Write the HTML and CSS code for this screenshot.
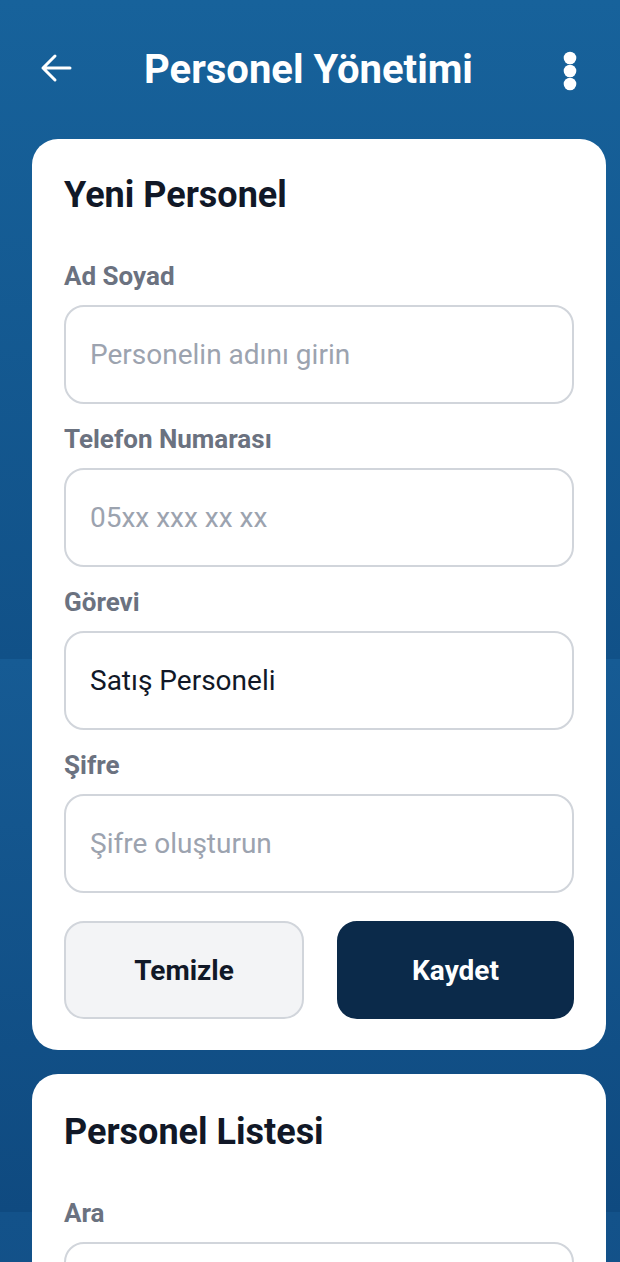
FILE: index.html
```html
<!DOCTYPE html>
<html lang="tr">
<head>
<meta charset="utf-8">
<title>Personel Yönetimi</title>
<link rel="stylesheet" href="styles.css">
</head>
<body>
<div class="page">
  <header class="topbar">
    <div class="topbar-left">
      <svg class="icon-back" width="32" height="32" viewBox="0 0 32 32" aria-hidden="true">
        <path d="M30 16H3M15 4L3 16l12 12" fill="none" stroke="#fff" stroke-width="3" stroke-linecap="round" stroke-linejoin="round"/>
      </svg>
    </div>
    <h1 class="topbar-title">Personel Yönetimi</h1>
    <div class="topbar-right">
      <svg class="icon-more" width="14" height="40" viewBox="0 0 14 40" aria-hidden="true">
        <circle cx="7" cy="7" r="6.3" fill="#fff"/>
        <circle cx="7" cy="20" r="6.3" fill="#fff"/>
        <circle cx="7" cy="33" r="6.3" fill="#fff"/>
      </svg>
    </div>
  </header>

  <section class="card">
    <h2 class="card-title">Yeni Personel</h2>
    <div class="fields">
      <div class="field">
        <label class="field-label">Ad Soyad</label>
        <div class="input placeholder">Personelin adını girin</div>
      </div>
      <div class="field">
        <label class="field-label">Telefon Numarası</label>
        <div class="input placeholder">05xx xxx xx xx</div>
      </div>
      <div class="field">
        <label class="field-label">Görevi</label>
        <div class="input">Satış Personeli</div>
      </div>
      <div class="field">
        <label class="field-label">Şifre</label>
        <div class="input placeholder">Şifre oluşturun</div>
      </div>
    </div>
    <div class="actions">
      <button class="btn btn-light">Temizle</button>
      <button class="btn btn-dark">Kaydet</button>
    </div>
  </section>

  <section class="card">
    <h2 class="card-title">Personel Listesi</h2>
    <div class="fields">
      <div class="field">
        <label class="field-label">Ara</label>
        <div class="input placeholder"></div>
      </div>
    </div>
  </section>
</div>
</body>
</html>
```

FILE: styles.css
```css
* { box-sizing: border-box; }

html, body {
  margin: 0;
  padding: 0;
}

body {
  font-family: Roboto, "Noto Sans", "Liberation Sans", sans-serif;
  background: linear-gradient(to bottom,
    #17629b 0px, #115188 659px,
    #165b94 659px, #0f4a80 1212px,
    #13528a 1212px, #124f86 1400px);
  min-height: 1262px;
}

.page {
  display: flex;
  flex-direction: column;
  padding-bottom: 40px;
}

.topbar {
  display: grid;
  grid-template-columns: 1fr auto 1fr;
  align-items: center;
  height: 139px;
  padding: 0 43px 0 40px;
}

.topbar-left { display: flex; justify-content: flex-start; }
.topbar-right { display: flex; justify-content: flex-end; }

.icon-back { display: block; margin-top: -3px; }
.icon-more { display: block; margin-top: 2px; }

.topbar-title {
  margin: 0;
  color: #fff;
  font-size: 40px;
  line-height: 48px;
  font-weight: 700;
  text-align: center;
  white-space: nowrap;
}

.card {
  background: #fff;
  margin: 0 14px 24px 32px;
  border-radius: 26px;
  padding: 36px 32px 31px;
}

.card + .card {
  padding-top: 38px;
}

.card-title {
  margin: 0;
  font-size: 36px;
  line-height: 40px;
  font-weight: 700;
  color: #111827;
}

.fields {
  display: flex;
  flex-direction: column;
  gap: 20px;
  margin-top: 46px;
}

.field {
  display: flex;
  flex-direction: column;
  gap: 14px;
}

.field-label {
  font-size: 26px;
  line-height: 30px;
  font-weight: 700;
  color: #6b7280;
}

.input {
  height: 99px;
  border: 2px solid #d1d5db;
  border-radius: 20px;
  padding: 0 24px;
  display: flex;
  align-items: center;
  font-size: 28px;
  color: #111827;
}

.input.placeholder { color: #9ca3af; }

.actions {
  display: grid;
  grid-template-columns: 240px 1fr;
  gap: 33px;
  margin-top: 28px;
}

.btn {
  height: 98px;
  border-radius: 20px;
  font-family: inherit;
  font-size: 28px;
  font-weight: 700;
  cursor: pointer;
}

.btn-light {
  background: #f3f4f6;
  border: 2px solid #d1d5db;
  color: #111827;
}

.btn-dark {
  background: #0b2a4a;
  border: 2px solid #0b2a4a;
  color: #fff;
}
```
